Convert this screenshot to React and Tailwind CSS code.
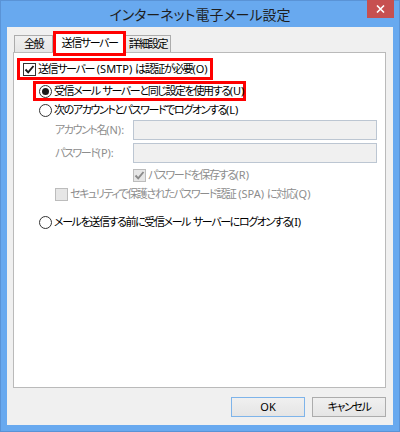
import React from 'react';

const font = "font-['Meiryo_UI','Noto_Sans','Noto_Sans_CJK_JP',sans-serif] [font-feature-settings:'palt']";

// Latin runs keep normal spacing; Japanese runs are pulled tighter (Meiryo UI is narrow)
function T({ children }) {
  const parts = String(children).split(/([\x00-\x7F]+)/).filter(Boolean);
  return (
    <span className="whitespace-nowrap">
      {parts.map((p, i) =>
        /^[\x00-\x7F]+$/.test(p) ? (
          <span key={i} className="tracking-[0px]">{p}</span>
        ) : (
          <span key={i} className="tracking-[-1.4px]">{p}</span>
        )
      )}
    </span>
  );
}

function CheckBox({ checked, disabled }) {
  return (
    <span
      className={`w-[13px] h-[13px] shrink-0 border flex items-center justify-center ${
        disabled ? 'border-[#bcbcbc] bg-[#e6e6e6]' : 'border-[#333333] bg-white'
      }`}
    >
      {checked && (
        <svg width="11" height="11" viewBox="0 0 11 11">
          <path
            d="M1.5 5.5 L4.2 8.3 L9.5 2"
            fill="none"
            stroke={disabled ? '#8a8a8a' : '#1a1a1a'}
            strokeWidth="1.9"
          />
        </svg>
      )}
    </span>
  );
}

function Radio({ checked }) {
  return (
    <span className="w-[13px] h-[13px] shrink-0 rounded-full border border-[#333333] bg-white flex items-center justify-center">
      {checked && <span className="w-[7px] h-[7px] rounded-full bg-[#1a1a1a]" />}
    </span>
  );
}

export default function App() {
  return (
    <div className={`w-[400px] h-[432px] bg-[#68a9ef] border border-[#5a93d6] flex flex-col text-black ${font}`}>
      {/* Title bar */}
      <div className="h-[26px] grid grid-cols-[1fr_auto_1fr] shrink-0">
        <div />
        <div className="self-center text-[14px] text-[#1e1e1e] pt-[1px] font-['Noto_Sans_CJK_JP',sans-serif]">インターネット電子メール設定</div>
        <div className="flex justify-end pr-[5px]">
          <div className="w-[27px] h-[18px] -mt-px bg-[#c75050] flex items-center justify-center">
            <svg width="9" height="8" viewBox="0 0 9 8">
              <path d="M1 0.5 L8 7.5 M8 0.5 L1 7.5" stroke="#fff" strokeWidth="1.6" />
            </svg>
          </div>
        </div>
      </div>

      {/* Client area */}
      <div className="flex-1 mx-[6px] mb-[6px] bg-[#f0f0f0] pl-[6px] pr-[7px] pt-[6px] pb-[8px] flex flex-col text-[11px]">
        {/* Tabs */}
        <div className="h-[19px] flex items-end pl-[1px] relative z-10">
          <div className="w-[39px] h-[17px] border border-b-0 border-[#acacac] bg-gradient-to-b from-[#f0f0f0] to-[#e5e5e5] flex items-center justify-center">
            <T>全般</T>
          </div>
          <div className="relative w-[69px] h-[20px] -mb-px ml-[2px] bg-white border border-b-0 border-[#acacac] flex items-center justify-center">
            <T>送信サーバー</T>
            <div className="absolute -inset-[3px] border-[3px] border-[#f00]" />
          </div>
          <div className="w-[46px] h-[17px] ml-[1px] border border-b-0 border-[#acacac] bg-gradient-to-b from-[#f0f0f0] to-[#e5e5e5] flex items-center justify-center">
            <T>詳細設定</T>
          </div>
        </div>

        {/* Panel */}
        <div className="h-[336px] bg-white border border-[#bababa] flex flex-col">
          <div className="ml-[3px] mt-[5px] w-[196px] h-[22px] border-[3px] border-[#f00] flex items-center pl-[3px] gap-[2px]">
            <CheckBox checked />
            <T>送信サーバー (SMTP) は認証が必要(O)</T>
          </div>

          <div className="ml-[19px] mt-px w-[213px] h-[20px] border-[3px] border-[#f00] flex items-center pl-[3px] gap-[2px]">
            <Radio checked />
            <T>受信メール サーバーと同じ設定を使用する(U)</T>
          </div>

          <div className="ml-[25px] h-[18px] flex items-center gap-[2px]">
            <Radio />
            <T>次のアカウントとパスワードでログオンする(L)</T>
          </div>

          <div className="ml-[41px] mt-[1px] h-[20px] flex items-center text-[#8d8d8d]">
            <span className="w-[78px]"><T>アカウント名(N):</T></span>
            <div className="w-[244px] h-[20px] border border-[#bcc6d2] bg-[#f0f0f0]" />
          </div>

          <div className="ml-[41px] mt-[3px] h-[20px] flex items-center text-[#8d8d8d]">
            <span className="w-[78px]"><T>パスワード(P):</T></span>
            <div className="w-[244px] h-[20px] border border-[#bcc6d2] bg-[#f0f0f0]" />
          </div>

          <div className="ml-[119px] mt-[3px] h-[18px] flex items-center gap-[2px] text-[#8d8d8d]">
            <CheckBox checked disabled />
            <T>パスワードを保存する(R)</T>
          </div>

          <div className="ml-[41px] mt-[1px] h-[18px] flex items-center gap-[2px] text-[#8d8d8d]">
            <CheckBox disabled />
            <T>セキュリティで保護されたパスワード認証 (SPA) に対応(Q)</T>
          </div>

          <div className="ml-[25px] mt-[10px] h-[18px] flex items-center gap-[2px]">
            <Radio />
            <T>メールを送信する前に受信メール サーバーにログオンする(I)</T>
          </div>
        </div>

        {/* Buttons */}
        <div className="mt-[9px] flex justify-end gap-[7px]">
          <button className="w-[74px] h-[20px] border border-[#7eb4ea] bg-gradient-to-b from-[#f0f0f0] to-[#e5e5e5] flex items-center justify-center">
            OK
          </button>
          <button className="w-[74px] h-[20px] border border-[#acacac] bg-gradient-to-b from-[#f0f0f0] to-[#e5e5e5] flex items-center justify-center">
            <T>キャンセル</T>
          </button>
        </div>
      </div>
    </div>
  );
}
